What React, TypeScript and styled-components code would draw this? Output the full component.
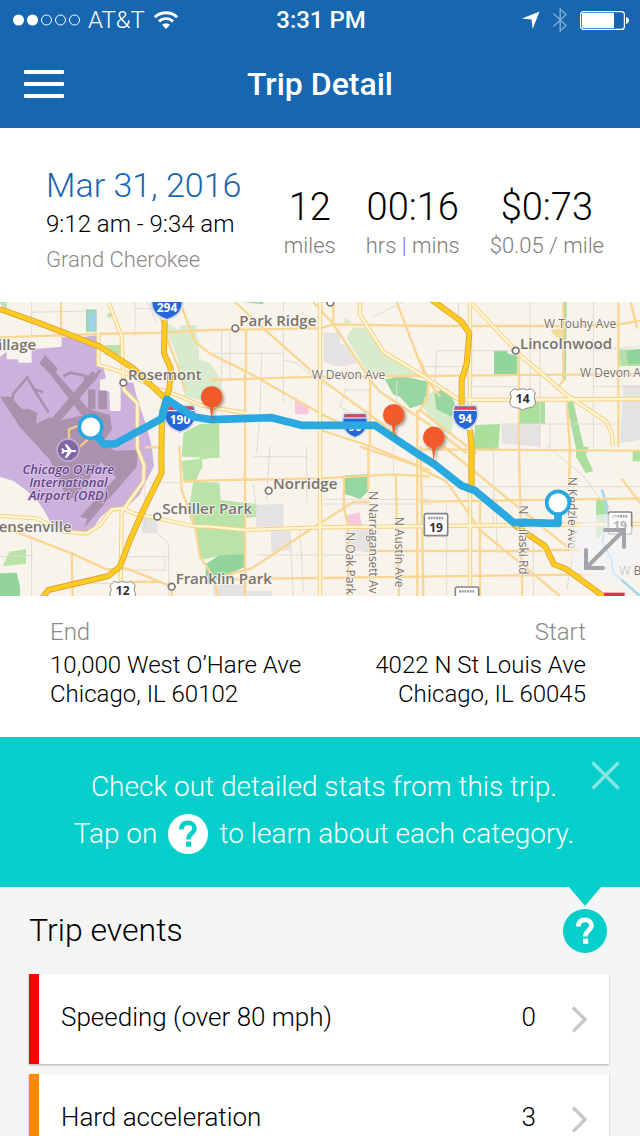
import React from "react";
import styled, { createGlobalStyle } from "styled-components";

const GlobalStyle = createGlobalStyle`
  *, *::before, *::after { box-sizing: border-box; }
  body {
    margin: 0;
    background: #f5f5f5;
    color: #000;
    font-family: Roboto, "Liberation Sans", sans-serif;
    font-weight: 300;
  }
  h1, h2, p, dl, dd, dt, ul { margin: 0; padding: 0; }
  button {
    border: 0;
    padding: 0;
    background: none;
    color: inherit;
    font: inherit;
    cursor: pointer;
  }
  svg { display: block; }
`;

/* ---------- header ---------- */

const Header = styled.header`
  background: #1766b0;
  color: #fff;
`;

const StatusBar = styled.div`
  display: grid;
  grid-template-columns: 1fr auto 1fr;
  align-items: center;
  height: 40px;
  padding: 0 11px 0 13px;
  font-size: 24px;
  line-height: 40px;
`;

const StatusGroup = styled.div<{ $end?: boolean }>`
  display: flex;
  align-items: center;
  justify-content: ${(p) => (p.$end ? "flex-end" : "flex-start")};
  gap: ${(p) => (p.$end ? 12 : 8)}px;
`;

const Carrier = styled.span`
  font-weight: 300;
`;

const Clock = styled.time`
  font-weight: 500;
`;

const NavBar = styled.div`
  display: grid;
  grid-template-columns: 64px 1fr 64px;
  align-items: center;
  height: 88px;
`;

const MenuButton = styled.button`
  display: flex;
  flex-direction: column;
  gap: 8px;
  margin-left: 24px;
  width: 40px;
`;

const MenuBar = styled.span`
  height: 4px;
  border-radius: 1px;
  background: #fff;
`;

const Title = styled.h1`
  font-size: 32px;
  line-height: 40px;
  font-weight: 500;
  text-align: center;
`;

/* ---------- trip summary ---------- */

const Summary = styled.section`
  display: flex;
  justify-content: space-between;
  align-items: flex-start;
  height: 174px;
  padding: 38px 36px 0 46px;
  background: #fff;
`;

const When = styled.div`
  display: flex;
  flex-direction: column;
`;

const TripDate = styled.h2`
  color: #1766b0;
  font-size: 34px;
  line-height: 38px;
  font-weight: 300;
`;

const TripTime = styled.p`
  font-size: 24px;
  line-height: 40px;
`;

const Vehicle = styled.p`
  color: #8a8a8a;
  font-size: 22px;
  line-height: 32px;
`;

const Stats = styled.dl`
  display: flex;
  gap: 30px;
  padding-top: 20px;
`;

const Stat = styled.div`
  display: flex;
  flex-direction: column-reverse;
  text-align: center;
`;

const StatValue = styled.dd`
  font-size: 38px;
  line-height: 43px;
`;

const StatLabel = styled.dt`
  color: #7d7d7d;
  font-size: 22px;
  line-height: 34px;
`;

/* ---------- map ---------- */

const MapFrame = styled.section`
  position: relative;
  overflow: hidden;
`;

const MapDrawing = styled.svg`
  width: 100%;
  height: auto;
`;

const ExpandButton = styled.button`
  position: absolute;
  right: 0;
  bottom: 12px;
  display: grid;
  place-items: center;
  width: 70px;
  height: 70px;
  border-radius: 50%;
  background: rgba(244, 245, 246, 0.66);
`;

/* ---------- addresses ---------- */

const Addresses = styled.section`
  display: flex;
  justify-content: space-between;
  height: 141px;
  padding: 20px 54px 0 50px;
  background: #fff;
`;

const Address = styled.div<{ $end?: boolean }>`
  text-align: ${(p) => (p.$end ? "right" : "left")};
`;

const AddressLabel = styled.h2`
  color: #8a8a8a;
  font-size: 24px;
  line-height: 32px;
  font-weight: 300;
`;

const AddressLine = styled.p`
  font-size: 24px;
  line-height: 29px;

  &:nth-of-type(1) { padding-top: 3px; }
`;

/* ---------- tip banner ---------- */

const Tip = styled.aside`
  position: relative;
  height: 150px;
  padding-top: 26px;
  background: #05cfcb;
  color: #fff;
  font-size: 28px;
  line-height: 47px;

  &::after {
    content: "";
    position: absolute;
    top: 100%;
    right: 39px;
    border: 16px solid transparent;
    border-top: 19px solid #05cfcb;
    border-bottom: 0;
  }
`;

const TipLine = styled.p`
  display: flex;
  align-items: center;
  justify-content: center;
  gap: 11px;
  padding: 0 0 0 8px;
`;

const CloseButton = styled.button`
  position: absolute;
  top: 24px;
  right: 20px;
`;

const HelpMark = styled.span`
  display: grid;
  place-items: center;
  width: 40px;
  height: 40px;
  border-radius: 50%;
  background: #fff;
  color: #05cfcb;
`;

const HelpButton = styled.button`
  display: grid;
  place-items: center;
  width: 44px;
  height: 44px;
  border-radius: 50%;
  background: #05cfcb;
  color: #fff;
`;

/* ---------- events ---------- */

const Events = styled.section`
  padding: 0 31px 30px 29px;
`;

const EventsHead = styled.div`
  display: flex;
  align-items: center;
  justify-content: space-between;
  height: 87px;
  padding-right: 2px;
`;

const EventsTitle = styled.h2`
  padding-bottom: 2px;
  font-size: 32px;
  line-height: 40px;
  font-weight: 300;
`;

const EventList = styled.ul`
  display: flex;
  flex-direction: column;
  gap: 10px;
  list-style: none;
`;

const EventRow = styled.button<{ $color: string }>`
  display: flex;
  align-items: center;
  width: 100%;
  height: 90px;
  padding: 0 22px;
  border-left: 10px solid ${(p) => p.$color};
  background: #fff;
  box-shadow: 0 1px 2px rgba(0, 0, 0, 0.3);
  font-size: 26px;
  line-height: 32px;
  text-align: left;
`;

const EventName = styled.span`
  flex: 1;
  padding-bottom: 4px;
`;

const EventCount = styled.span`
  margin-right: 34px;
  padding-bottom: 4px;
`;

/* ---------- small icons ---------- */

const SignalDots = () => (
  <svg width="67" height="12" viewBox="0 0 67 12" aria-hidden="true">
    {[0, 1, 2, 3, 4].map((i) => (
      <circle
        key={i}
        cx={5.5 + i * 14}
        cy="6"
        r={i < 2 ? 5.5 : 5}
        fill={i < 2 ? "#fff" : "none"}
        stroke={i < 2 ? "none" : "#fff"}
      />
    ))}
  </svg>
);

const WifiIcon = () => (
  <svg width="26" height="20" viewBox="0 0 26 20" fill="none" stroke="#fff" aria-hidden="true">
    <path d="M1.8 7.2a16 16 0 0 1 22.4 0" strokeWidth="3" />
    <path d="M6 11.4a10 10 0 0 1 14 0" strokeWidth="2.8" />
    <path d="M13 19l-4-4.2a5.8 5.8 0 0 1 8 0z" fill="#fff" stroke="none" />
  </svg>
);

const LocationIcon = () => (
  <svg width="18" height="18" viewBox="0 0 18 18" aria-hidden="true">
    <path d="M17.6.4L10.6 18 9.6 8.4 0 7.4z" fill="#fff" />
  </svg>
);

const BluetoothIcon = () => (
  <svg width="16" height="26" viewBox="0 0 16 26" fill="none" stroke="#7ba7d3" strokeWidth="1.6" aria-hidden="true">
    <path d="M1.5 6.5L14 18.5 8.2 24V2L14 7.5 1.5 19.5" />
  </svg>
);

const BatteryIcon = () => (
  <svg width="49" height="19" viewBox="0 0 49 19" aria-hidden="true">
    <rect x=".6" y=".6" width="43.8" height="17.8" rx="3" fill="none" stroke="#fff" strokeWidth="1.2" />
    <rect x="2" y="2" width="32" height="15" rx="1" fill="#fff" />
    <path d="M46 6c2 .6 3 2 3 3.500s-1 2.900-3 3.500z" fill="#fff" />
  </svg>
);

const QuestionIcon = () => (
  <svg width="20" height="28" viewBox="0 0 20 28" aria-hidden="true">
    <path
      d="M3.400 9.600C3.400 5 6 2.900 10 2.900s6.500 2.200 6.500 5.700c0 4.600-6 5.200-6 9.800v1"
      fill="none"
      stroke="currentColor"
      strokeWidth="4.600"
    />
    <rect x="8" y="21.600" width="5.200" height="5.200" fill="currentColor" />
  </svg>
);

const CloseIcon = () => (
  <svg width="29" height="29" viewBox="0 0 29 29" stroke="#84e6e4" strokeWidth="3.400" aria-hidden="true">
    <path d="M1.500 1.500l26 26M27.500 1.500l-26 26" />
  </svg>
);

const ChevronIcon = () => (
  <svg width="17" height="27" viewBox="0 0 17 27" fill="none" stroke="#c8c8c8" strokeWidth="3.400" aria-hidden="true">
    <path d="M3 1.500l12 12-12 12" />
  </svg>
);

const ExpandIcon = () => (
  <svg width="42" height="44" viewBox="0 0 42 44" fill="none" stroke="#a3a5a8" strokeWidth="4" aria-hidden="true">
    <path d="M2 41L40 3M21 3h19v17M2 23v18h17" strokeLinecap="round" />
  </svg>
);

/* ---------- map data, three units to the pixel ---------- */

const AREAS: [string, string][] = [
  ["#b9e3a8", "M0 6H20V28L0 10z"],
  ["#9cd8a4", "M258 28H290V95H258z"],
  ["#9ed4ea", "M266 36l22 4-3 52-20-2z"],
  ["#b9e3a8", "M322 40h14v12h-14zM315 135h47v30h-47z"],
  ["#d8ebcd", "M455 6l30 54 50 30 10-15h45v40h7v63l33 12 35 50v62l-30 20-30-20-50-14-12-40-12-80-26-60z"],
  ["#b7e3a6", "M545 470l5-70 50-28 58-2v104z"],
  ["#9cd8a4", "M705 4h85v9z"],
  ["#d8ebcd", "M1035 50l20 16-8 10-14-8zM1040 115l10-22 14-12 30 2 56 72 50 30 85 55-26-8-154-10z"],
  ["#98d7a2", "M1155 238l50-10 80 17v62l-55 18-30-35-20-5z"],
  ["#e5e3e1", "M970 98h50v32l30 10 20 50-35 8h-30l-35-13z"],
  ["#f8c6dd", "M885 298l40 17v28h-40z"],
  ["#d8ebcd", "M1262 300l43-30 60 70-12 62-33-10-50-70z"],
  ["#98d7a2", "M1260 262l14 8-3 45-11-5zM1303 278l37-14 25 46-10 40-46-22z"],
  ["#92d59b", "M1482 152h40v8l30 8v54h-70z"],
  ["#f4dc9b", "M1650 90l45-6v36l-22-4z"],
  ["#aadca0", "M1690 6h10l-2 234h-8zM1698 305h22l32 140h-24z"],
  ["#aadf9d", "M1560 305h75v67h-75zM1425 375l75-3-5 76h-75z"],
  ["#e5e3e1", "M1505 375h115v65l-115-10zM1870 255h50v165l-60 10z"],
  ["#b4e2a6", "M1857 148h63v50h-63z"],
  ["#8fd49c", "M1878 152l42-6v45h-36z"],
  ["#aadf9d", "M1430 438h65v8zM1728 440h38l-8 25 22 48-22 7-30-50zM1788 598h32v60l-18 50-14 10zM1898 450h22v34h-22z"],
  ["#b9e3a8", "M545 483l60-7 3 24-13 23-5 20h-40zM598 438h60v32l-60 10z"],
  ["#b9e3a8", "M580 545l78 3 4 52 108 12-2 38-33 5v110l-85 5-50 10-10-80-22-50 2-44z"],
  ["#93d49c", "M618 792l40-26 77-3 3 36-58 26-65 30z"],
  ["#b9e3a8", "M28 755l50-8v44l-70 8z"],
  ["#93d49c", "M0 820l50-2 10 42v28H0z"],
  ["#e5e3e1", "M425 650h48v50h-48zM768 616l82-6v70h-82zM812 693h60l-4 57-53 6zM640 853h100v19h75v16H640zM1035 693l70-8v71l-70-6z"],
  ["#94d7a0", "M1035 526l70-3v50l-25 25-25-10-20-5z"],
  ["#f8c6dd", "M1038 648l40-12 7 40h-45z"],
  [
    "#ccb1dc",
    "M0 170L20 155V178H55V188H95V148L185 140V112H245L295 105 292 195 310 200 318 235 300 240V270L328 275 330 333H362V245L400 248 410 290 440 380 455 438 462 498 430 560 420 583 395 608 370 623 330 626 300 653 280 683 260 700H190L150 663 130 628 110 598 75 568 40 543 0 530z",
  ],
  [
    "#ab91ae",
    "M0 290H32L66 328 84 326 112 338 108 372 150 352 180 362 250 345 268 328 330 345 336 388 306 430 345 452 414 450 410 500 252 684 262 656 240 650 348 532 304 486 250 560 205 606 150 480 60 382zM118 190l17-24 37 38-4 14 132 147-25 20-125-163zM277 212l18 16-148 175-19-15zM264 268h22v60h-22zM295 272h26v55h-26z",
  ],
];

const GREY_STREETS = [
  "M95 6V105M95 37l160-4M405 6V108M405 25h50M440 6l30 60",
  "M665 90v160M690 245V90M770 460l10-120 5-180M630 160H850M850 6v300M850 180l40 10 90 70",
  "M1120 50l90-44M1040 260l-20 60 110 60M1030 270h80M1190 240v150",
  "M1375 6v70M1310 150l-6 110M1310 152h240M1590 6v300M1260 200h150M1620 120v330M1780 6v440",
  "M1420 260h140M1780 150l140-10M1780 260h140M1500 372h420M1650 372V450",
  "M810 438l-10 160M920 438v170M760 470h160M970 598h320M960 598v20M970 612h330",
  "M760 550l10 90M770 765h330M870 700l10 188M900 690l10 188M1180 438v90",
  "M450 548h95M435 550v140M470 700l36 30v158M365 770h145M370 810h125v-38M0 770l100-4M95 710v178M220 850h120",
  "M1260 560h660M1480 438v240M1340 610v278M1490 600v160M1640 438l110 90 60 80M1600 700v188M1720 560v200l-20 110",
];

const MINOR_ROADS = [
  "M183 6V112M0 112l290-10 190-4 150-8 330-5 40-12 290 5h370l190-3 70-13",
  "M540 6l45 120 45 35 110 54 220 125 60 30M475 30l35 110 35 90 10 40",
  "M630 240l330-10 300-2 660-6M738 88v132M735 220v668",
  "M1110 240v200M1105 438v132M1252 330v558M1262 438l8 450M705 6l85 79 170 150 150 110 80 60",
  "M1110 240l30 35 150 100 110 85M940 6l60 67 100 150 15 20M1000 6v70",
  "M1190 6l80 209 15 35-5 50-28 40M960 390l150 48 150 62M1080 440l210 70",
  "M1557 165v285l10 438M1690 6v234l-20 30M1700 300l10 150-3 110M1855 6v434M1892 6l20 80",
  "M1260 448l660 4M630 541l330-6 225-12 105 7M1260 605l660-10",
  "M1100 753h530M1640 750h100M735 836l225-2 820-11M630 838h120M680 825l75-20 200-132 105-67h50",
  "M1032 528v97l13 55v208M1187 523l10 365M1260 180l30 70 30 40",
  "M1330 438l370 302M1260 505l80 40 100 145 240 198M1865 535l55 75M1260 330l90 70 80 60",
  "M0 680l60 20 155 60 105 48 60-3 135 55M215 760l3 128M515 862v26",
  "M538 438l7 132 40 108 15 92 40 60 15 58M550 545l80-4M390 846h90M435 442h60M1440 600v288",
];

const MAJOR_ROADS = [
  "M325 6l40 104 7 160 40 40v135l20 50-2 50-65 90-3 215",
  "M295 100v95l85 25 90 45 60 20 70 30 140 25",
  "M960 6v882M1080 6v39l70 110 120 73 100 67 30 5 520-3",
  "M1410 6v882M1415 10l145 155 140 120 120 80 15 35 3 38",
  "M0 648l110 7 80 40 70 5 40-25 35-47 35-3 30 15 180 38 50 2 105 10 225-8 330-4 630-6",
];

const HIGHWAYS = [
  "M0 27l120 43 180 70 100 65 95 90M494 60l-2 100 20 45-4 60-22 70-2 145 1 38-55 112-40 90-30 80-35 28-180 42-37 48",
  "M1285-8l100 73 23 35-8 90-15 50v80M1410 390l5 50v130M1540 673l95 65 27 55 38 15 120 88",
];

type LabelSpec = { x: number; y: number; text: string; size?: number; turn?: boolean };

const LABELS: LabelSpec[] = [
  { x: -6, y: 151, text: "illage" },
  { x: 384, y: 240, text: "Rosemont" },
  { x: 718, y: 78, text: "Park Ridge" },
  { x: 1560, y: 146, text: "Lincolnwood" },
  { x: -4, y: 696, text: "ensenville" },
  { x: 487, y: 643, text: "Schiller Park" },
  { x: 819, y: 568, text: "Norridge" },
  { x: 527, y: 851, text: "Franklin Park" },
];

const STREET_LABELS: LabelSpec[] = [
  { x: 935, y: 237, text: "W Devon Ave" },
  { x: 1632, y: 85, text: "W Touhy Ave" },
  { x: 1740, y: 231, text: "W Devon A" },
  { x: 1858, y: 826, text: "W B" },
  { x: 1037, y: 696, text: "N Oak Park", turn: true },
  { x: 1106, y: 573, text: "N Narragansett Av", turn: true },
  { x: 1185, y: 650, text: "N Austin Ave", turn: true },
  { x: 1558, y: 616, text: "N Pulaski Rd", turn: true },
  { x: 1704, y: 530, text: "N Kedzie Ave", turn: true },
];

const TOWNS = [
  [370, 248],
  [706, 85],
  [991, 8],
  [1547, 152],
  [472, 650],
  [806, 572],
  [515, 860],
];

const PINS = [
  [635, 291],
  [1181, 345],
  [1301, 413],
];

const MapText = styled.text<{ $size: number }>`
  font-family: "Open Sans", "Noto Sans", sans-serif;
  font-size: ${(p) => p.$size}px;
  font-weight: ${(p) => (p.$size > 40 ? 600 : 500)};
  fill: #77736f;
  stroke: #f9f5ee;
  stroke-width: 5px;
  stroke-linejoin: round;
  paint-order: stroke;
`;

const AirportText = styled(MapText)`
  font-style: italic;
  font-weight: 600;
  fill: #65458a;
  stroke: #dccbe8;
  text-anchor: middle;
`;

const ShieldText = styled.text<{ $dark?: boolean }>`
  font-family: "Open Sans", "Noto Sans", sans-serif;
  font-size: 36px;
  font-weight: 700;
  fill: ${(p) => (p.$dark ? "#333" : "#fff")};
  text-anchor: middle;
`;

const Roads = ({ paths, color, width }: { paths: string[]; color: string; width: number }) => (
  <g fill="none" stroke={color} strokeWidth={width} strokeLinejoin="round">
    {paths.map((d) => (
      <path key={d} d={d} />
    ))}
  </g>
);

const Interstate = ({ x, y, label, wide }: { x: number; y: number; label?: string; wide?: boolean }) => (
  <g transform={`translate(${x} ${y})`}>
    <g transform={wide ? "scale(1.250 1.100)" : undefined}>
      <path
        d="M-33-35H33C42-12 38 12 22 26 14 33 5 36 0 38-5 36-14 33-22 26-38 12-42-12-33-35z"
        fill="#2766d6"
        stroke="#d8dbe2"
        strokeWidth="5"
      />
      <path d="M-31-32H31V-22H-31z" fill="#d84a5e" />
      <path d="M-35-21H35" stroke="#fff" strokeWidth="3" />
    </g>
    {label && <ShieldText y="17">{label}</ShieldText>}
  </g>
);

const UsRoute = ({ x, y, label }: { x: number; y: number; label: string }) => (
  <g transform={`translate(${x} ${y})`}>
    <path
      d="M-26-30q12 7 26 0 14 7 26 0l12 13q-8 12 0 24 2 17-16 20-14 0-22 8-8-8-22-8-18-3-16-20 8-12 0-24z"
      fill="#fff"
      stroke="#8b8b8b"
      strokeWidth="3"
    />
    <ShieldText $dark y="12">{label}</ShieldText>
  </g>
);

const StateRoute = ({ x, y, label }: { x: number; y: number; label?: string }) => (
  <g transform={`translate(${x} ${y})`}>
    <rect x="-35" y="-33" width="70" height="66" rx="5" fill="#fff" stroke="#858585" strokeWidth="5" />
    <path d="M-24-20H24" stroke="#9b9b9b" strokeWidth="7" strokeDasharray="6 2" />
    {label && <ShieldText $dark y="21">{label}</ShieldText>}
  </g>
);

const TripMap = () => (
  <MapDrawing viewBox="0 6 1920 882" role="img" aria-label="Route of the trip">
    <defs>
      <filter id="pinShadow" x="-50%" y="-50%" width="200%" height="200%">
        <feDropShadow dx="5" dy="5" stdDeviation="4" floodOpacity="0.4" />
      </filter>
    </defs>
    <rect y="6" width="1920" height="882" fill="#f8f4ec" />
    {AREAS.map(([fill, d]) => (
      <path key={d} d={d} fill={fill} />
    ))}
    <path
      d="M190 228l22-10 46 10-8 36M38 284l44-52 20 36 28 8M102 268l44 70M30 330l10-46M300 210l-26 40"
      fill="none"
      stroke="#ab91ae"
      strokeWidth="8"
    />
    <path d="M207 420v-32l30-12M240 440l24-22" fill="none" stroke="#f0cd85" strokeWidth="7" />
    <path d="M1805 568l17 52-14 108 27 50 5 40 80 70" fill="none" stroke="#a5d8ee" strokeWidth="8" />
    <Roads paths={GREY_STREETS} color="#dedbd7" width={3} />
    <Roads paths={MINOR_ROADS} color="#fad694" width={7} />
    <Roads paths={MAJOR_ROADS} color="#f6d08a" width={13} />
    <Roads paths={MAJOR_ROADS} color="#fff7cf" width={7} />
    <Roads paths={HIGHWAYS} color="#dda03a" width={18} />
    <Roads paths={HIGHWAYS} color="#fdcc1f" width={13} />

    {STREET_LABELS.map(({ x, y, text, turn }) => (
      <MapText
        key={`${text}${x}`}
        $size={36}
        transform={`translate(${x} ${y})${turn ? " rotate(90)" : ""}`}
      >
        {text}
      </MapText>
    ))}
    {LABELS.map(({ x, y, text, size = 45 }) => (
      <MapText key={text} x={x} y={y} $size={size}>
        {text}
      </MapText>
    ))}
    {TOWNS.map(([x, y]) => (
      <circle key={x} cx={x} cy={y} r="10" fill="#fff" stroke="#77736f" strokeWidth="5" />
    ))}
    <circle cx="204" cy="450" r="33" fill="#8066a3" stroke="#c4b2d6" strokeWidth="4" />
    <path
      d="M184 446l5-1 5 5h9l-9-17h7l14 17h11q6 3 0 6h-11l-14 17h-7l9-17h-9l-5 5-5-1 3-7z"
      fill="#fff"
    />
    <AirportText $size={39} x="205" y="523">Chicago O'Hare</AirportText>
    <AirportText $size={39} x="205" y="561">International</AirportText>
    <AirportText $size={39} x="205" y="600">Airport (ORD)</AirportText>

    <Interstate x={501} y={18} label="294" wide />
    <Interstate x={540} y={355} label="190" wide />
    <Interstate x={1065} y={375} label="90" />
    <Interstate x={1396} y={352} label="94" />
    <UsRoute x={1568} y={296} label="14" />
    <UsRoute x={368} y={874} label="12" />
    <StateRoute x={1401} y={894} />
    <StateRoute x={1308} y={674} label="19" />
    <StateRoute x={1860} y={669} label="19" />
    <path d="M1812 888v-10h62v10z" fill="#e0304a" />

    <path
      d="M272 381l38 51h35l140-76 15-58 80 52 55 9 180-6 90 23h220l120 80 60 38 80 63 40 15 115 95 134 3V608"
      fill="none"
      stroke="#2aa8e0"
      strokeWidth="23"
      strokeLinejoin="round"
    />
    {[
      [272, 381],
      [1674, 608],
    ].map(([x, y]) => (
      <circle key={x} cx={x} cy={y} r="34" fill="#fff" stroke="#2aa8e0" strokeWidth="11" />
    ))}
    {PINS.map(([x, y]) => (
      <path
        key={x}
        d={`M${x - 5} ${y + 31}A32 32 0 1 1 ${x + 5} ${y + 31}L${x} ${y + 70}z`}
        fill="#f15a29"
        filter="url(#pinShadow)"
      />
    ))}
  </MapDrawing>
);

/* ---------- page ---------- */

const STATS = [
  { value: "12", label: "miles" },
  { value: "00:16", label: "hrs | mins" },
  { value: "$0:73", label: "$0.05 / mile" },
];

const EVENTS = [
  { name: "Speeding (over 80 mph)", count: 0, color: "#ff0000" },
  { name: "Hard acceleration", count: 3, color: "#ff8a00" },
];

export default function App() {
  return (
    <>
      <GlobalStyle />
      <Header>
        <StatusBar>
          <StatusGroup>
            <SignalDots />
            <Carrier>AT&amp;T</Carrier>
            <WifiIcon />
          </StatusGroup>
          <Clock>3:31 PM</Clock>
          <StatusGroup $end>
            <LocationIcon />
            <BluetoothIcon />
            <BatteryIcon />
          </StatusGroup>
        </StatusBar>
        <NavBar>
          <MenuButton aria-label="Menu">
            <MenuBar />
            <MenuBar />
            <MenuBar />
          </MenuButton>
          <Title>Trip Detail</Title>
        </NavBar>
      </Header>
      <main>
        <Summary>
          <When>
            <TripDate>Mar 31, 2016</TripDate>
            <TripTime>9:12 am - 9:34 am</TripTime>
            <Vehicle>Grand Cherokee</Vehicle>
          </When>
          <Stats>
            {STATS.map((s) => (
              <Stat key={s.value}>
                <StatLabel>{s.label}</StatLabel>
                <StatValue>{s.value}</StatValue>
              </Stat>
            ))}
          </Stats>
        </Summary>
        <MapFrame>
          <TripMap />
          <ExpandButton aria-label="Expand map">
            <ExpandIcon />
          </ExpandButton>
        </MapFrame>
        <Addresses>
          <Address>
            <AddressLabel>End</AddressLabel>
            <AddressLine>10,000 West O’Hare Ave</AddressLine>
            <AddressLine>Chicago, IL 60102</AddressLine>
          </Address>
          <Address $end>
            <AddressLabel>Start</AddressLabel>
            <AddressLine>4022 N St Louis Ave</AddressLine>
            <AddressLine>Chicago, IL 60045</AddressLine>
          </Address>
        </Addresses>
        <Tip>
          <TipLine>Check out detailed stats from this trip.</TipLine>
          <TipLine>
            Tap on
            <HelpMark>
              <QuestionIcon />
            </HelpMark>
            to learn about each category.
          </TipLine>
          <CloseButton aria-label="Dismiss">
            <CloseIcon />
          </CloseButton>
        </Tip>
        <Events>
          <EventsHead>
            <EventsTitle>Trip events</EventsTitle>
            <HelpButton aria-label="About trip events">
              <QuestionIcon />
            </HelpButton>
          </EventsHead>
          <EventList>
            {EVENTS.map((e) => (
              <li key={e.name}>
                <EventRow $color={e.color}>
                  <EventName>{e.name}</EventName>
                  <EventCount>{e.count}</EventCount>
                  <ChevronIcon />
                </EventRow>
              </li>
            ))}
          </EventList>
        </Events>
      </main>
    </>
  );
}
